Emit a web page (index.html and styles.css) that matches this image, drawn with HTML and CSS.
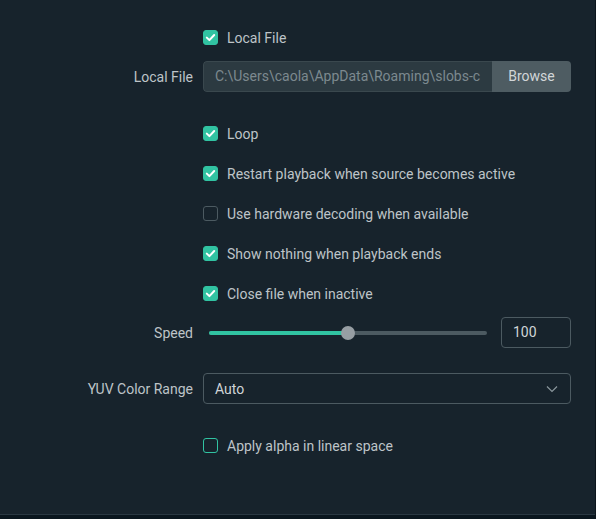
FILE: index.html
```html
<!DOCTYPE html>
<html>
<head>
<meta charset="utf-8">
<link rel="stylesheet" href="styles.css">
</head>
<body>
<div class="screen">
  <form class="form">
    <div class="row first">
      <div class="label"></div>
      <label class="check"><span class="box on"><svg viewBox="0 0 15 15"><path d="M3.8 7.6 L6.4 10.1 L11.2 5" fill="none" stroke="#fff" stroke-width="2" stroke-linecap="round" stroke-linejoin="round"/></svg></span>Local File</label>
    </div>
    <div class="row g8">
      <div class="label">Local File</div>
      <div class="file">
        <div class="file-path">C:\Users\caola\AppData\Roaming\slobs-c</div>
        <div class="browse">Browse</div>
      </div>
    </div>
    <div class="row g26">
      <div class="label"></div>
      <label class="check"><span class="box on"><svg viewBox="0 0 15 15"><path d="M3.8 7.6 L6.4 10.1 L11.2 5" fill="none" stroke="#fff" stroke-width="2" stroke-linecap="round" stroke-linejoin="round"/></svg></span>Loop</label>
    </div>
    <div class="row g9">
      <div class="label"></div>
      <label class="check"><span class="box on"><svg viewBox="0 0 15 15"><path d="M3.8 7.6 L6.4 10.1 L11.2 5" fill="none" stroke="#fff" stroke-width="2" stroke-linecap="round" stroke-linejoin="round"/></svg></span>Restart playback when source becomes active</label>
    </div>
    <div class="row g9">
      <div class="label"></div>
      <label class="check"><span class="box"></span>Use hardware decoding when available</label>
    </div>
    <div class="row g9">
      <div class="label"></div>
      <label class="check"><span class="box on"><svg viewBox="0 0 15 15"><path d="M3.8 7.6 L6.4 10.1 L11.2 5" fill="none" stroke="#fff" stroke-width="2" stroke-linecap="round" stroke-linejoin="round"/></svg></span>Show nothing when playback ends</label>
    </div>
    <div class="row g9">
      <div class="label"></div>
      <label class="check"><span class="box on"><svg viewBox="0 0 15 15"><path d="M3.8 7.6 L6.4 10.1 L11.2 5" fill="none" stroke="#fff" stroke-width="2" stroke-linecap="round" stroke-linejoin="round"/></svg></span>Close file when inactive</label>
    </div>
    <div class="row g8">
      <div class="label">Speed</div>
      <div class="slider-wrap">
        <div class="slider">
          <div class="track"><div class="fill" style="width:50%"></div></div>
          <div class="thumb" style="left:50%"></div>
        </div>
        <div class="num">100</div>
      </div>
    </div>
    <div class="row g25">
      <div class="label">YUV Color Range</div>
      <div class="select">
        <span>Auto</span>
        <svg class="chev" viewBox="0 0 12 8"><path d="M1 1.5 L6 6.5 L11 1.5" fill="none" stroke="#8a969c" stroke-width="1.2"/></svg>
      </div>
    </div>
    <div class="row g26">
      <div class="label"></div>
      <label class="check"><span class="box focus"></span>Apply alpha in linear space</label>
    </div>
  </form>
  <div class="bottom"></div>
</div>
</body>
</html>
```
FILE: styles.css
```css
html, body {
  margin: 0;
  padding: 0;
  background: #17232c;
}
body {
  width: 596px;
  height: 519px;
  overflow: hidden;
  font-family: Roboto, "Liberation Sans", Arial, sans-serif;
  font-size: 14px;
  color: #bec4c8;
}
.screen {
  width: 595px;
  height: 519px;
  border-right: 1px solid #0b151c;
  display: flex;
  flex-direction: column;
  position: relative;
}
.form {
  flex: 1;
  padding-top: 22px;
  display: flex;
  flex-direction: column;
}
.row {
  height: 31px;
  display: flex;
  align-items: center;
}
.g8 { margin-top: 8px; }
.g9 { margin-top: 9px; }
.g25 { margin-top: 25px; }
.g26 { margin-top: 26px; }
.label {
  width: 203px;
  padding-right: 10px;
  box-sizing: border-box;
  text-align: right;
  color: #bec4c8;
  flex-shrink: 0;
}
.check {
  display: flex;
  align-items: center;
  gap: 9px;
  color: #bec4c8;
}
.box {
  width: 15px;
  height: 15px;
  box-sizing: border-box;
  border-radius: 3px;
  border: 1px solid #4c5a61;
  display: block;
}
.box.on {
  background: #31c3a2;
  border-color: #31c3a2;
}
.box.on svg {
  display: block;
  width: 15px;
  height: 15px;
  margin: -1px;
}
.box.focus {
  border-color: #31c3a2;
}
.file {
  width: 368px;
  height: 31px;
  display: flex;
  border-radius: 4px;
  overflow: hidden;
}
.file-path {
  flex: 1;
  min-width: 0;
  background: #2c3a41;
  border: 1px solid #3a484e;
  border-right: none;
  border-radius: 4px 0 0 4px;
  color: #7c898f;
  padding: 0 0 0 11px;
  white-space: nowrap;
  overflow: hidden;
  line-height: 29px;
}
.browse {
  width: 79px;
  flex-shrink: 0;
  background: #4e5c62;
  color: #d2d6d8;
  text-align: center;
  line-height: 31px;
}
.slider-wrap {
  width: 368px;
  display: flex;
  align-items: center;
}
.slider {
  position: relative;
  margin-left: 6px;
  width: 278px;
  height: 14px;
  display: flex;
  align-items: center;
}
.track {
  width: 100%;
  height: 4px;
  border-radius: 2px;
  background: #4c5a61;
  overflow: hidden;
}
.fill {
  height: 100%;
  background: #31c3a2;
}
.thumb {
  position: absolute;
  top: 0;
  width: 14px;
  height: 14px;
  margin-left: -7px;
  border-radius: 50%;
  background: #979ea3;
}
.num {
  margin-left: auto;
  width: 70px;
  height: 31px;
  box-sizing: border-box;
  border: 1px solid #4c5a61;
  border-radius: 4px;
  padding-left: 11px;
  line-height: 29px;
  color: #d0d5d8;
}
.select {
  width: 368px;
  height: 31px;
  box-sizing: border-box;
  border: 1px solid #4c5a61;
  border-radius: 4px;
  padding: 0 11px;
  display: flex;
  align-items: center;
  justify-content: space-between;
  color: #d0d5d8;
}
.chev {
  width: 12px;
  height: 8px;
  margin-right: 1px;
}
.bottom {
  height: 4px;
  border-top: 1px solid #2a3842;
  background: #0a161e;
}
```
